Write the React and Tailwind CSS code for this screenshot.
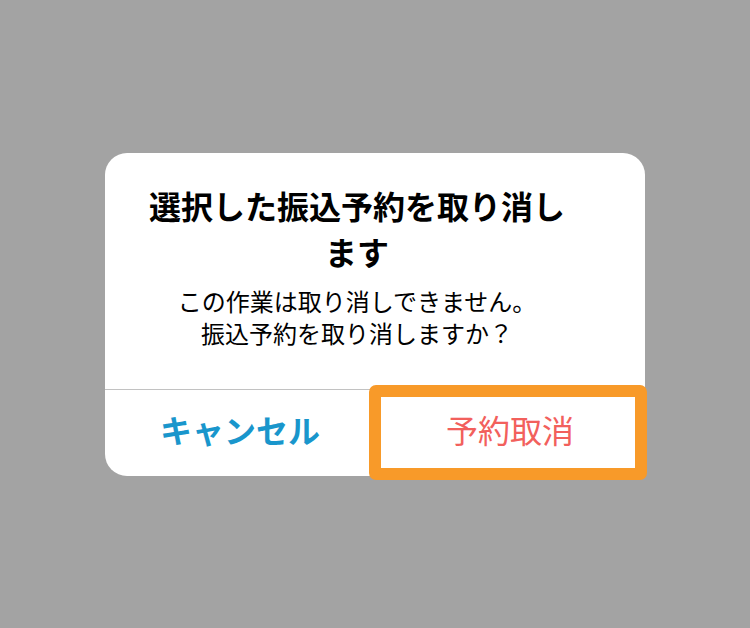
export default function App() {
  return (
    <div
      className="min-h-screen w-full bg-[#a3a3a3] flex items-center justify-center"
      style={{ fontFamily: '"Noto Sans CJK JP", "Noto Sans", sans-serif' }}
    >
      <div className="w-[540px] bg-white rounded-[22px] flex flex-col">
        {/* message */}
        <div className="h-[236px] pl-[32px] pr-[68px] pt-[29px] text-center text-black">
          <h2 className="text-[32px] leading-[46px] font-bold">
            選択した振込予約を取り消し
            <br />
            ます
          </h2>
          <p className="mt-[11px] text-[24px] leading-[32px]">
            この作業は取り消しできません。
            <br />
            振込予約を取り消しますか？
          </p>
        </div>

        <div className="h-px bg-[#c2c2c2]" />

        {/* actions */}
        <div className="h-[86px] grid grid-cols-2">
          <button className="flex items-center justify-center pb-[8px] text-[32px] font-bold text-[#1996cc]">
            キャンセル
          </button>
          <button className="relative flex items-center justify-center pb-[8px] text-[32px] text-[#f2605c]">
            予約取消
            <span className="absolute -left-[6px] -right-[2px] -top-[5px] -bottom-[4px] border-[12px] border-[#f89a29] rounded-[7px] pointer-events-none" />
          </button>
        </div>
      </div>
    </div>
  );
}
